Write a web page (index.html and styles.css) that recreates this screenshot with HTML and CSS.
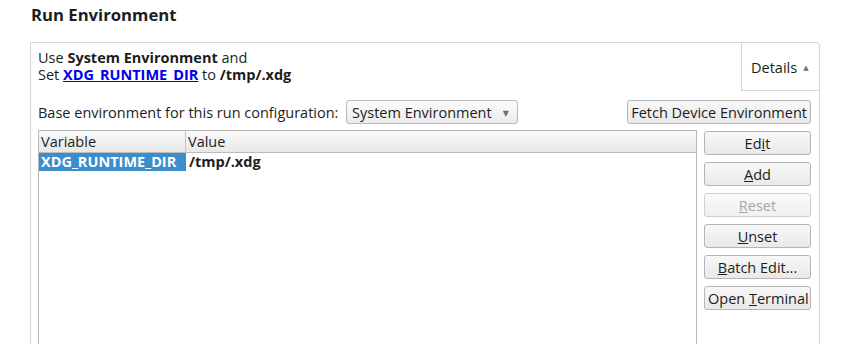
FILE: index.html
```html
<!DOCTYPE html>
<html lang="en">
<head>
  <meta charset="UTF-8">
  <title>Run Environment</title>
  <link rel="stylesheet" href="styles.css">
</head>
<body>
  <h2 class="title">Run Environment</h2>

  <div class="panel">
    <!-- Özet satırı -->
    <div class="summary-row">
      <div class="summary">
        <div>Use <b>System Environment</b> and</div>
        <div>Set <a href="#">XDG_RUNTIME_DIR</a> to <b>/tmp/.xdg</b></div>
      </div>
      <div class="details">Details <span class="arrow">&#9650;</span></div>
    </div>

    <div class="config-row">
      <span class="label">Base environment for this run configuration:</span>
      <div class="combo">System Environment <span class="combo-arrow">&#9660;</span></div>
      <button class="btn fetch">Fetch Device Environment</button>
    </div>

    <div class="body-row">
      <div class="table">
        <div class="thead">
          <div class="col-var">Variable</div>
          <div class="col-val">Value</div>
        </div>
        <div class="trow">
          <div class="col-var selected">XDG_RUNTIME_DIR</div>
          <div class="col-val"><b>/tmp/.xdg</b></div>
        </div>
      </div>
      <div class="buttons">
        <button class="btn">Ed<u>i</u>t</button>
        <button class="btn"><u>A</u>dd</button>
        <button class="btn" disabled><u>R</u>eset</button>
        <button class="btn"><u>U</u>nset</button>
        <button class="btn"><u>B</u>atch Edit...</button>
        <button class="btn">Open <u>T</u>erminal</button>
      </div>
    </div>
  </div>
</body>
</html>
```

FILE: styles.css
```css
body {
  margin: 0;
  background: #ffffff;
  font-family: "Open Sans", "DejaVu Sans", sans-serif;
  font-size: 14.5px;
  color: #1d1d1d;
  overflow: hidden;
}
.title {
  margin: 0;
  padding: 3px 0 0 31px;
  height: 42px;
  box-sizing: border-box;
  font-size: 16.7px;
  font-weight: bold;
}
.panel {
  margin-left: 30px;
  width: 790px;
  height: 310px;
  box-sizing: border-box;
  border: 1px solid #d6d6d6;
  border-bottom: none;
  border-top-right-radius: 4px;
}
.summary-row {
  display: flex;
  height: 48px;
}
.summary {
  flex: 1;
  padding: 6px 0 0 7px;
}
.summary div {
  height: 17px;
  line-height: 17px;
}
.summary a {
  color: #0000ee;
  font-weight: bold;
}
.details {
  width: 78px;
  border-left: 1px solid #d6d6d6;
  border-bottom: 1px solid #d6d6d6;
  box-sizing: border-box;
  display: flex;
  align-items: center;
  padding-left: 9px;
  padding-top: 2px;
}
.arrow {
  font-size: 7px;
  color: #707070;
  margin-left: 6px;
}
.config-row {
  display: flex;
  align-items: center;
  margin: 9px 8px 0 7px;
  height: 24px;
}
.label {
  width: 308px;
  flex-shrink: 0;
}
.combo {
  width: 172px;
  height: 24px;
  box-sizing: border-box;
  border: 1px solid #b8b8b8;
  border-radius: 3px;
  background: linear-gradient(#fbfbfb, #ececec);
  display: flex;
  align-items: center;
  padding-left: 5px;
}
.combo-arrow {
  font-size: 8px;
  color: #707070;
  margin-left: auto;
  margin-right: 8px;
}
.btn {
  font-family: inherit;
  font-size: 14.5px;
  color: #1d1d1d;
  height: 24px;
  border: 1px solid #b5b5b5;
  border-radius: 3px;
  background: linear-gradient(#f8f8f8, #e9e9e9);
  padding: 0 3px;
  white-space: nowrap;
}
.btn:disabled {
  color: #a8a8a8;
  border-color: #cfcfcf;
  background: linear-gradient(#f9f9f9, #f0f0f0);
}
.fetch {
  margin-left: auto;
}
.body-row {
  display: flex;
  gap: 7px;
  margin: 6px 8px 0 7px;
}
.table {
  width: 660px;
  height: 220px;
  box-sizing: border-box;
  border: 1px solid #b8b8b8;
  border-bottom: none;
}
.thead {
  display: flex;
  height: 21px;
  background: linear-gradient(#f9f9f9, #e8e8e8);
  border-bottom: 1px solid #bdbdbd;
}
.thead div {
  line-height: 21px;
  padding-left: 2px;
}
.thead .col-var {
  border-right: 1px solid #c8c8c8;
}
.col-var {
  width: 144px;
  padding-left: 2px;
}
.col-val {
  flex: 1;
  padding-left: 3px;
}
.trow {
  display: flex;
  height: 18px;
  line-height: 18px;
}
.selected {
  background: #3a8ecc;
  color: #ffffff;
  font-weight: bold;
  width: 145px;
}
.buttons {
  width: 107px;
  display: flex;
  flex-direction: column;
  gap: 7px;
  padding-top: 1px;
}
.buttons .btn {
  width: 107px;
}
```
